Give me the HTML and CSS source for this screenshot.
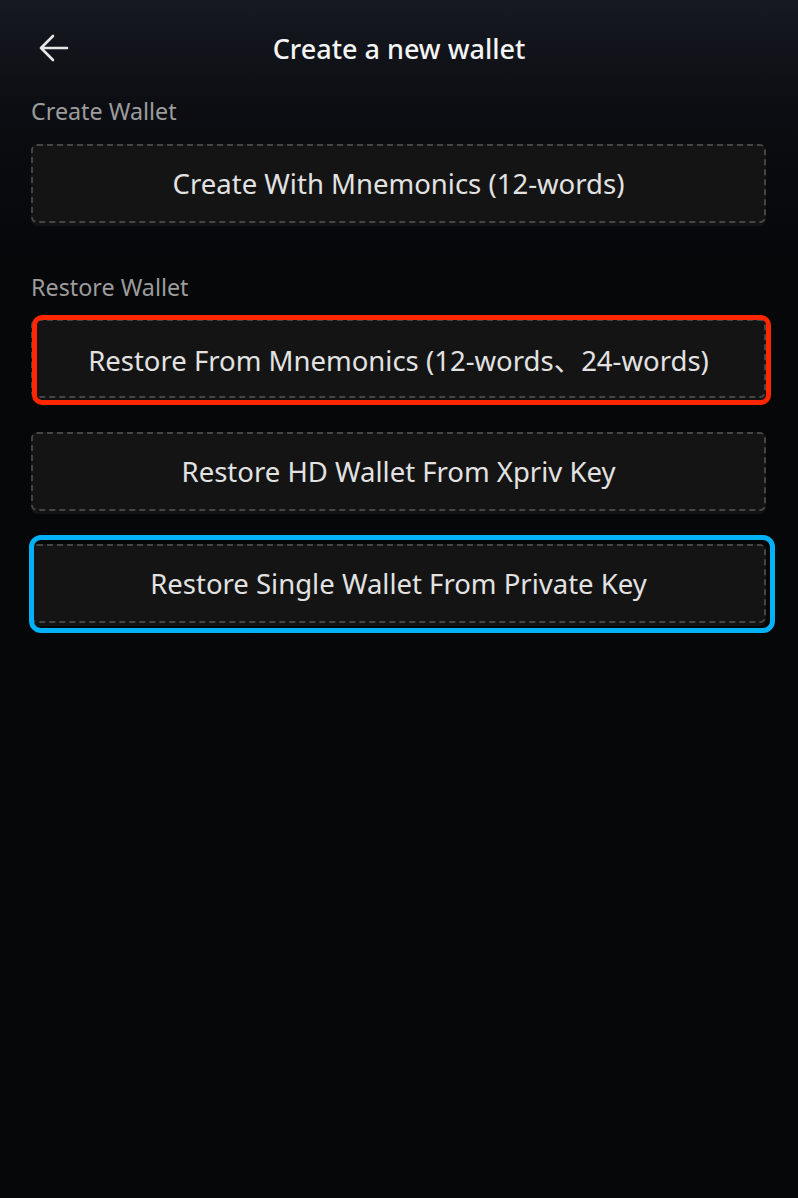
FILE: index.html
```html
<!DOCTYPE html>
<html lang="en">
<head>
  <meta charset="UTF-8" />
  <meta name="viewport" content="width=device-width, initial-scale=1.0"/>
  <title>Create a new wallet</title>
  <link rel="stylesheet" href="styles.css">
</head>
<body>
  <!-- Header -->
  <header class="topbar">
    <button class="back-btn" aria-label="Back">
      <svg width="30" height="28" viewBox="0 0 30 28">
        <path d="M14 2 L2 14 L14 26 M2 14 H28" fill="none" stroke="#e6e6e6" stroke-width="2.6" stroke-linecap="round" stroke-linejoin="round"/>
      </svg>
    </button>
    <h1 class="title">Create a new wallet</h1>
  </header>

  <main class="content">
    <!-- Create -->
    <section class="group">
      <div class="group-label">Create Wallet</div>
      <div class="option">Create With Mnemonics (12-words)</div>
    </section>

    <!-- Restore -->
    <section class="group restore">
      <div class="group-label">Restore Wallet</div>
      <div class="option">
        Restore From Mnemonics (12-words、24-words)
        <span class="mark mark-red"></span>
      </div>
      <div class="option">Restore HD Wallet From Xpriv Key</div>
      <div class="option">
        Restore Single Wallet From Private Key
        <span class="mark mark-blue"></span>
      </div>
    </section>
  </main>
</body>
</html>
```

FILE: styles.css
```css
* {
  box-sizing: border-box;
}

html, body {
  height: 100%;
}

body {
  margin: 0;
  font-family: 'Noto Sans', 'Noto Sans CJK SC', sans-serif;
  background: linear-gradient(180deg, #161920 0px, #0b0d12 110px, #060709 260px, #050608 100%);
  color: #e2e2e2;
}

/* Header */
.topbar {
  position: relative;
  height: 96px;
  display: flex;
  align-items: center;
  justify-content: center;
}

.back-btn {
  position: absolute;
  left: 39px;
  top: 34px;
  padding: 0;
  border: none;
  background: none;
  line-height: 0;
  cursor: pointer;
}

.title {
  margin: 0;
  font-size: 27px;
  font-weight: 500;
  color: #f4f4f4;
}

/* Content */
.content {
  padding: 0 32px 0 31px;
}

.group {
  display: flex;
  flex-direction: column;
}

.group-label {
  font-size: 23.3px;
  color: #9c9c9c;
  line-height: 30px;
  margin: 0 0 18px;
}

.restore {
  margin-top: 15.5px;
}

.restore .group-label {
  margin-bottom: 17px;
}

.option {
  position: relative;
  height: 79px;
  display: flex;
  align-items: center;
  justify-content: center;
  background: #141414;
  border: 2px dashed #454545;
  border-radius: 6px;
  box-shadow: 0 3px 0 #121314;
  font-size: 27.5px;
  color: #e2e2e2;
  margin-bottom: 33.5px;
}

/* Annotation outlines */
.mark {
  position: absolute;
  border-style: solid;
  pointer-events: none;
}

.mark-red {
  left: -1px;
  right: -7px;
  top: -6px;
  bottom: -9px;
  border-width: 5px;
  border-color: #ff2600;
  border-radius: 10px;
}

.mark-blue {
  left: -4px;
  right: -11px;
  top: -11px;
  bottom: -12px;
  border-width: 5px;
  border-color: #00b1f5;
  border-radius: 12px;
}
```
